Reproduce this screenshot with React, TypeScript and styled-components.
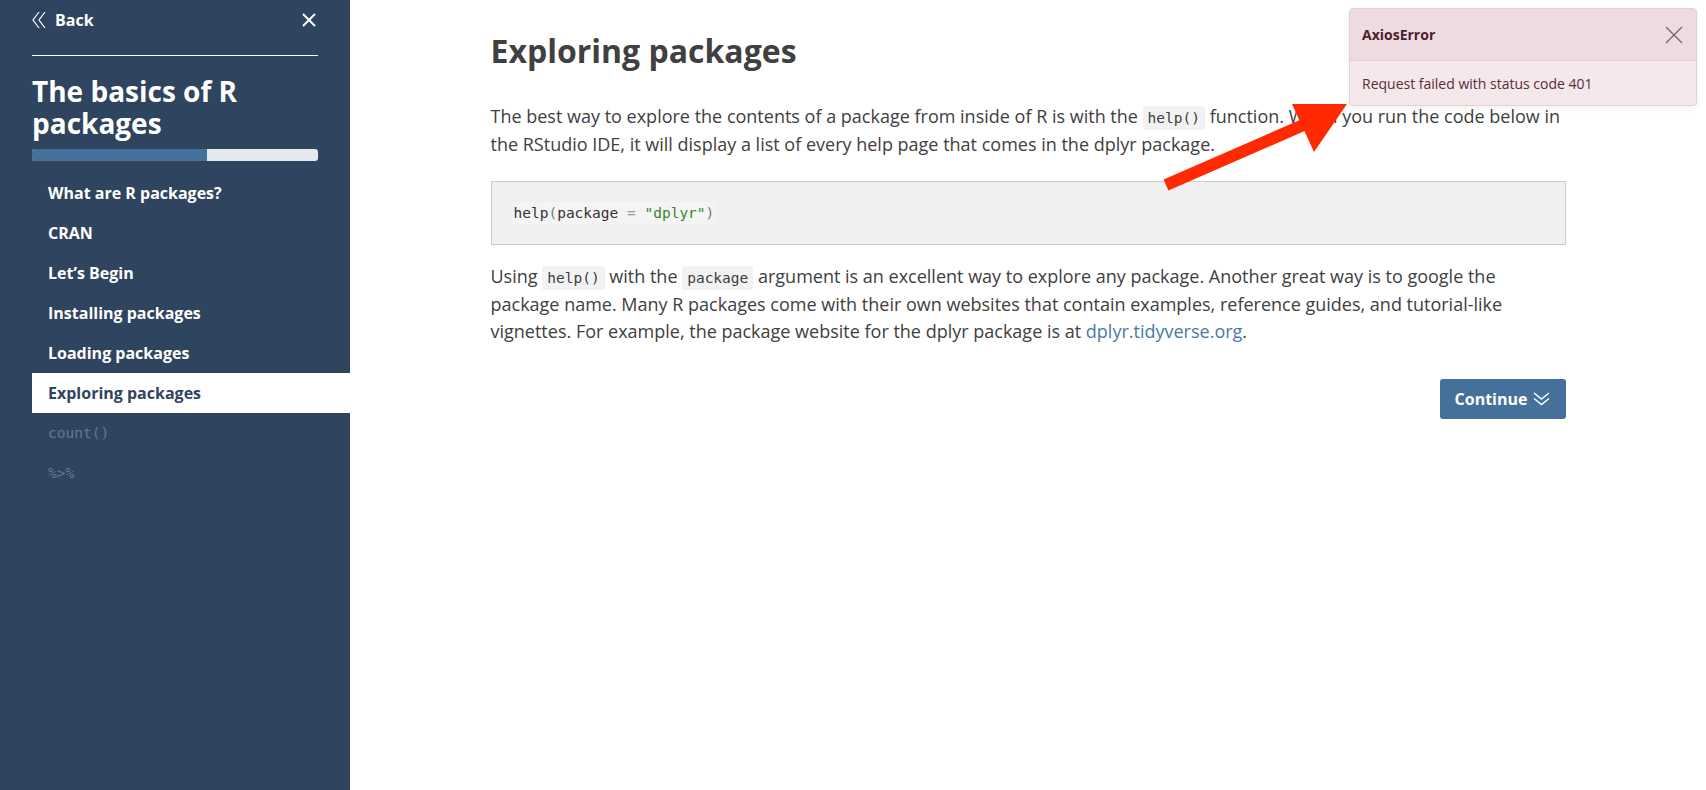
import React from "react";
import styled, { createGlobalStyle } from "styled-components";

const GlobalStyle = createGlobalStyle`
  html, body { margin: 0; padding: 0; }
  body {
    font-family: "Open Sans", "Noto Sans", sans-serif;
    background: #ffffff;
    overflow: hidden;
  }
  * { box-sizing: border-box; }
`;

const Shell = styled.div`
  display: flex;
  width: 100%;
  height: 790px;
  position: relative;
`;

const Sidebar = styled.aside`
  width: 350px;
  flex: 0 0 350px;
  background: #2f445e;
  color: #ffffff;
  padding-left: 32px;
  display: flex;
  flex-direction: column;
`;

const SideHead = styled.div`
  margin-right: 32px;
  display: flex;
  flex-direction: column;
`;

const TopRow = styled.div`
  height: 42px;
  padding-bottom: 3px;
  display: flex;
  align-items: center;
  justify-content: space-between;
`;

const BackLink = styled.div`
  display: flex;
  align-items: center;
  gap: 9px;
  font-weight: 700;
  font-size: 16px;
  color: #ffffff;
`;

const CloseBtn = styled.div`
  width: 16px;
  height: 16px;
  display: flex;
  align-items: center;
  justify-content: center;
  margin-right: 1px;
`;

const Divider = styled.div`
  height: 1px;
  background: #ffffff;
  margin-top: 13px;
`;

const Title = styled.h2`
  margin: 19px 0 0 0;
  font-size: 28px;
  line-height: 32px;
  font-weight: 700;
  color: #ffffff;
`;

const Progress = styled.div`
  height: 12px;
  margin-top: 10px;
  border-radius: 3px;
  background: #e6e9ec;
  overflow: hidden;
  display: flex;
`;

const ProgressFill = styled.div<{ $pct: number }>`
  width: ${(p) => p.$pct}%;
  background: #457099;
`;

const Nav = styled.nav`
  margin-top: 12px;
  display: flex;
  flex-direction: column;
`;

const NavItem = styled.div<{ $active?: boolean; $disabled?: boolean; $mono?: boolean }>`
  height: 40px;
  display: flex;
  align-items: center;
  padding-left: 16px;
  font-family: ${(p) => (p.$mono ? '"DejaVu Sans Mono", monospace' : '"Open Sans", sans-serif')};
  font-size: ${(p) => (p.$mono ? "14.5px" : "16px")};
  font-weight: ${(p) => (p.$mono ? 400 : 700)};
  background: ${(p) => (p.$active ? "#ffffff" : "transparent")};
  color: ${(p) => (p.$active ? "#2f445e" : p.$disabled ? "#66788e" : "#ffffff")};
`;

const Main = styled.main`
  flex: 1;
  display: flex;
  justify-content: center;
`;

const Column = styled.div`
  width: 1075px;
  padding-top: 31px;
  color: #404040;
`;

const H1 = styled.h1`
  margin: 0;
  font-size: 32px;
  line-height: 40px;
  font-weight: 700;
  color: #404040;
`;

const Para = styled.p<{ $mb: number }>`
  margin: 0 0 ${(p) => p.$mb}px 0;
  font-size: 18px;
  line-height: 27.5px;
  color: #404040;
`;

const FirstPara = styled(Para)`
  margin-top: 32px;
`;

const InlineCode = styled.code`
  font-family: "DejaVu Sans Mono", monospace;
  font-size: 14.5px;
  line-height: 1;
  background: #f2f2f2;
  color: #404040;
  padding: 4px 5px;
  border-radius: 2px;
`;

const CodeBlock = styled.pre`
  margin: 0 0 18px 0;
  height: 64px;
  background: #f0f0f0;
  border: 1px solid #cccccc;
  display: flex;
  align-items: center;
  padding: 0 20px;
`;

const CodeText = styled.code`
  font-family: "DejaVu Sans Mono", monospace;
  font-size: 14.5px;
  line-height: 23px;
  background: #f4f4f4;
  color: #333333;
  padding: 0 2px;
`;

const Tok = styled.span<{ $kind: "punct" | "op" | "str" }>`
  color: ${(p) => (p.$kind === "str" ? "#36862f" : p.$kind === "op" ? "#9a9a9a" : "#777777")};
`;

const Link = styled.a`
  color: #4a79a5;
  text-decoration: none;
`;

const Actions = styled.div`
  display: flex;
  justify-content: flex-end;
  margin-top: 33px;
`;

const ContinueBtn = styled.button`
  height: 40px;
  width: 126px;
  border: none;
  border-radius: 3px;
  background: #457099;
  color: #ffffff;
  font-family: "Open Sans", sans-serif;
  font-weight: 700;
  font-size: 16px;
  display: flex;
  align-items: center;
  justify-content: center;
  gap: 6px;
  padding: 0;
`;

const Toast = styled.div`
  position: absolute;
  top: 8px;
  right: 9px;
  width: 348px;
  border: 1px solid #e7cdd4;
  border-radius: 4px;
  overflow: hidden;
  background: #f4e8eb;
  box-shadow: 0 2px 6px rgba(0, 0, 0, 0.06);
`;

const ToastHeader = styled.div`
  height: 52px;
  background: #eedbe1;
  border-bottom: 1px solid #e4c9d0;
  display: flex;
  align-items: center;
  justify-content: space-between;
  padding: 0 13px 0 12px;
  font-weight: 700;
  font-size: 14px;
  color: #4b1f2c;
`;

const ToastBody = styled.div`
  height: 44px;
  display: flex;
  align-items: center;
  padding: 0 12px;
  font-size: 14px;
  color: #5a2b39;
`;

const ArrowLayer = styled.svg`
  position: absolute;
  left: 0;
  top: 0;
  pointer-events: none;
`;

export default function App() {
  const items = [
    "What are R packages?",
    "CRAN",
    "Let\u2019s Begin",
    "Installing packages",
    "Loading packages",
  ];
  return (
    <>
      <GlobalStyle />
      <Shell>
        <Sidebar>
          <SideHead>
            <TopRow>
              <BackLink>
                <svg width="14" height="18" viewBox="0 0 14 18" fill="none" stroke="#fff" strokeWidth="1.2">
                  <polyline points="7,1 1,9 7,17" />
                  <polyline points="13,1 7,9 13,17" />
                </svg>
                Back
              </BackLink>
              <CloseBtn>
                <svg width="14" height="14" viewBox="0 0 14 14" stroke="#fff" strokeWidth="2">
                  <line x1="1" y1="1" x2="13" y2="13" />
                  <line x1="13" y1="1" x2="1" y2="13" />
                </svg>
              </CloseBtn>
            </TopRow>
            <Divider />
            <Title>The basics of R packages</Title>
            <Progress>
              <ProgressFill $pct={61.2} />
            </Progress>
          </SideHead>
          <Nav>
            {items.map((t) => (
              <NavItem key={t}>{t}</NavItem>
            ))}
            <NavItem $active>Exploring packages</NavItem>
            <NavItem $disabled $mono>count()</NavItem>
            <NavItem $disabled $mono>%&gt;%</NavItem>
          </Nav>
        </Sidebar>
        <Main>
          <Column>
            <H1>Exploring packages</H1>
            <FirstPara $mb={23}>
              The best way to explore the contents of a package from inside of R is with the{" "}
              <InlineCode>help()</InlineCode> function. When you run the code below in the RStudio IDE, it will
              display a list of every help page that comes in the dplyr package.
            </FirstPara>
            <CodeBlock>
              <CodeText>
                help<Tok $kind="punct">(</Tok>package <Tok $kind="op">=</Tok> <Tok $kind="str">"dplyr"</Tok>
                <Tok $kind="punct">)</Tok>
              </CodeText>
            </CodeBlock>
            <Para $mb={0}>
              Using <InlineCode>help()</InlineCode> with the <InlineCode>package</InlineCode> argument is an
              excellent way to explore any package. Another great way is to google the package name. Many R
              packages come with their own websites that contain examples, reference guides, and tutorial-like
              vignettes. For example, the package website for the dplyr package is at{" "}
              <Link href="#">dplyr.tidyverse.org</Link>.
            </Para>
            <Actions>
              <ContinueBtn>
                Continue
                <svg width="17" height="14" viewBox="0 0 17 14" fill="none" stroke="#fff" strokeWidth="1.5">
                  <polyline points="1,1 8.5,7 16,1" />
                  <polyline points="1,6.5 8.5,12.5 16,6.5" />
                </svg>
              </ContinueBtn>
            </Actions>
          </Column>
        </Main>
        <ArrowLayer width="1706" height="790" viewBox="0 0 1706 790">
          <line x1="1166" y1="185" x2="1308" y2="123" stroke="#ff2a00" strokeWidth="12" strokeLinecap="butt" />
          <polygon points="1347,104 1292,104 1314,152" fill="#ff2a00" />
        </ArrowLayer>
        <Toast>
          <ToastHeader>
            AxiosError
            <svg width="18" height="18" viewBox="0 0 18 18" stroke="#6b6b6b" strokeWidth="1.3">
              <line x1="1" y1="1" x2="17" y2="17" />
              <line x1="17" y1="1" x2="1" y2="17" />
            </svg>
          </ToastHeader>
          <ToastBody>Request failed with status code 401</ToastBody>
        </Toast>
      </Shell>
    </>
  );
}
